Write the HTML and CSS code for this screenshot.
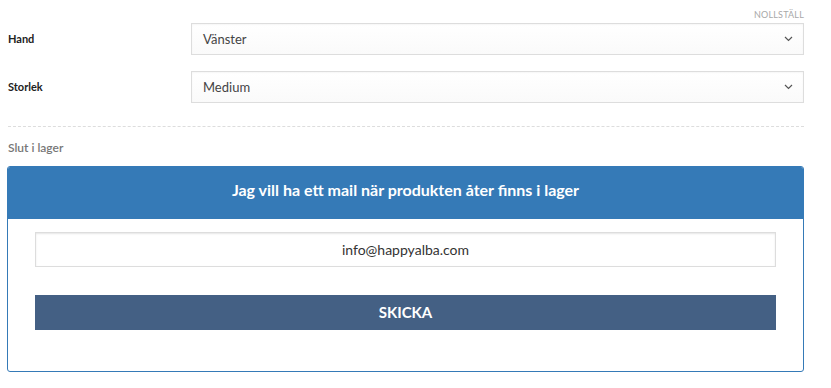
FILE: index.html
```html
<!DOCTYPE html>
<html lang="sv">
<head>
<meta charset="utf-8">
<link rel="stylesheet" href="styles.css">
</head>
<body>
<div class="wrap">
  <div class="reset-row"><a class="reset">Nollställ</a></div>
  <div class="field">
    <label class="label">Hand</label>
    <div class="select"><span>Vänster</span>
      <svg class="chev" width="9" height="6" viewBox="0 0 9 6"><path d="M1 1l3.5 3.5L8 1" fill="none" stroke="#555" stroke-width="1.2"/></svg>
    </div>
  </div>
  <div class="field">
    <label class="label">Storlek</label>
    <div class="select"><span>Medium</span>
      <svg class="chev" width="9" height="6" viewBox="0 0 9 6"><path d="M1 1l3.5 3.5L8 1" fill="none" stroke="#555" stroke-width="1.2"/></svg>
    </div>
  </div>
  <div class="divider"></div>
  <p class="stock">Slut i lager</p>
  <div class="notify">
    <div class="notify-head">Jag vill ha ett mail när produkten åter finns i lager</div>
    <div class="notify-body">
      <div class="email">info@happyalba.com</div>
      <div class="btn">SKICKA</div>
    </div>
  </div>
</div>
</body>
</html>
```
FILE: styles.css
```css
html, body { margin: 0; padding: 0; background: #fff; }
body { font-family: Lato, "Open Sans", sans-serif; color: #333; }
.wrap { width: 797px; margin-left: 7px; padding-top: 8px; }
.reset-row { display: flex; justify-content: flex-end; height: 15px; }
.reset { font-size: 9px; color: #a8a8a8; text-transform: uppercase; letter-spacing: 0.2px; line-height: 13px; }
.field { display: flex; align-items: center; margin-bottom: 16px; }
.label { width: 183px; padding-left: 1px; font-size: 11px; font-weight: 700; color: #222; line-height: 13px; margin-top: -2px; }
.select { flex: 1; height: 30px; border: 1px solid #ddd; display: flex; align-items: center; justify-content: space-between; padding: 0 10px 0 11px; font-size: 13px; color: #444; background: linear-gradient(#fff, #fafafa); box-shadow: inset 0 1px 2px rgba(0,0,0,0.04); }
.chev { display: block; }
.divider { border-top: 1px dashed #ddd; margin: 23px 0 0 1px; }
.stock { margin: 13px 0 0 1px; font-size: 12px; font-weight: 600; color: #777; line-height: 15px; height: 26px; }
.notify { border: 1px solid #357ab7; border-radius: 3px; overflow: hidden; }
.notify-head { background: #357ab7; color: #fff; font-weight: 700; font-size: 16px; text-align: center; height: 52px; line-height: 46px; }
.notify-body { padding: 13px 27px 41px; }
.email { height: 33px; border: 1px solid #ddd; box-shadow: inset 0 1px 2px rgba(0,0,0,0.1); text-align: center; font-size: 14px; line-height: 33px; color: #333; }
.btn { margin-top: 28px; height: 35px; background: #446084; color: #fff; font-weight: 700; font-size: 15px; text-align: center; line-height: 35px; }
```
